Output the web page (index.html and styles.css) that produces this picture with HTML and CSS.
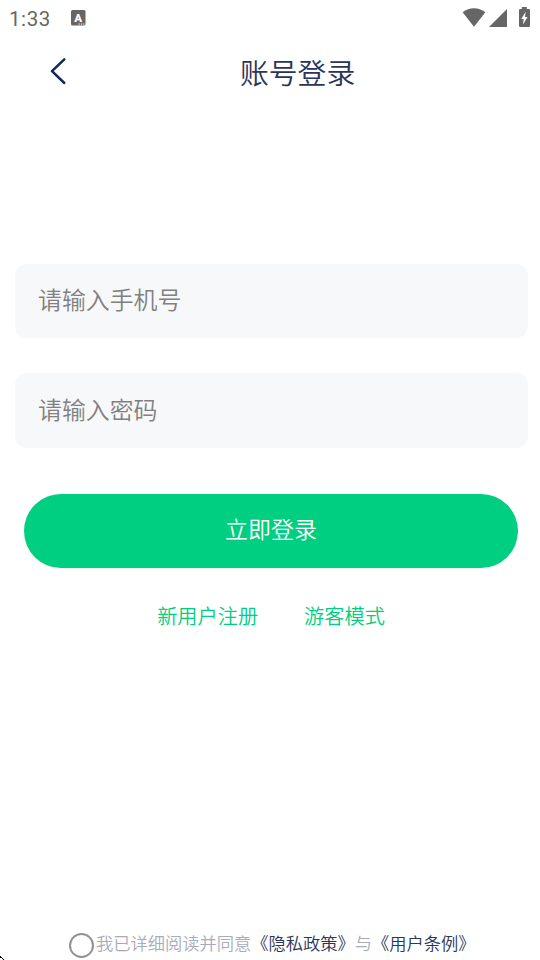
FILE: index.html
```html
<!DOCTYPE html>
<html lang="zh-CN">
<head>
<meta charset="utf-8">
<title>账号登录</title>
<link rel="stylesheet" href="styles.css">
</head>
<body>
<div class="screen">
  <div class="status">
    <span class="time">1:33</span>
    <svg class="app-icon" width="15" height="16" viewBox="0 0 15 16"><rect width="14.5" height="15.5" rx="1.5" fill="#666"/><text class="app-letter" x="7.200" y="11.500" text-anchor="middle">A</text><path d="M7.500 14h1.400m1 0h1.400m1 0h1.200" stroke="#fff" stroke-width="1"/></svg>
    <svg class="signals" width="70" height="22" viewBox="0 0 70 22"><g fill="#666"><path d="M.6 5.300C7.500-.1 16.500-.1 23.400 5.300L12 19.700z"/><path d="M45 2v18H27z"/><path d="M59.800 0h5v2h2.200q1 0 1 1v15.800q0 1.200-1.200 1.200h-8.600q-1.200 0-1.200-1.200V3q0-1 1-1h1.800z"/></g><path d="M63.700 4.700 59.200 12h2.500l-.8 5.500L65.600 10h-2.700z" fill="#fff"/></svg>
  </div>
  <header class="header">
    <svg class="back" width="18" height="28" viewBox="0 0 18 28"><path d="M15.300 2.300 3 14.200 15.300 26" fill="none" stroke="#12285a" stroke-width="2.500" stroke-linecap="round" stroke-linejoin="round"/></svg>
    <h1 class="title">账号登录</h1>
  </header>
  <main class="form">
    <input class="field" type="text" placeholder="请输入手机号">
    <input class="field field-password" type="password" placeholder="请输入密码">
    <button class="submit">立即登录</button>
    <nav class="links"><a>新用户注册</a><a>游客模式</a></nav>
  </main>
  <footer class="terms">
    <span class="radio"></span>
    <p class="terms-text">我已详细阅读并同意<a>《隐私政策》</a>与<a>《用户条例》</a></p>
  </footer>
  <svg class="corner" width="5" height="5" viewBox="0 0 5 5" shape-rendering="crispEdges"><path d="M0 1h1v1h1v1H0zM2 3h1v1H2zM3 4h1v1H3z"/></svg>
</div>
</body>
</html>
```

FILE: styles.css
```css
* { box-sizing: border-box; }
body {
  margin: 0;
  background: #fff;
  font-family: "Noto Sans CJK SC", sans-serif;
}
.screen {
  position: relative;
  display: flex;
  flex-direction: column;
  height: 960px;
  overflow: hidden;
}
.status {
  display: flex;
  align-items: center;
  height: 36px;
  padding: 0 8px 0 9px;
}
.time {
  width: 62px;
  color: #666;
  font: 450 20.500px/36px Roboto, sans-serif;
  letter-spacing: .6px;
  padding-top: 1px;
}
.app-letter {
  fill: #fff;
  font: 900 11.500px Roboto, sans-serif;
}
.signals { margin-left: auto; }
.header {
  display: flex;
  height: 74px;
  padding-left: 49px;
}
.back { margin-top: 21px; }
.title {
  margin: 15px 0 0 173px;
  color: #2a3558;
  font-size: 28.800px;
  font-weight: 350;
  line-height: 42px;
}
.form {
  display: flex;
  flex-direction: column;
  padding: 154px 12.500px 0 14.500px;
}
.field {
  width: 100%;
  height: 74px;
  margin-bottom: 35px;
  padding: 0 23.500px 5px;
  border: 0;
  border-radius: 12px;
  background: #f7f8fa;
  font: 350 23.900px "Noto Sans CJK SC", sans-serif;
}
.field-password {
  height: 75px;
  margin-bottom: 34px;
  padding-bottom: 4px;
}
.field::placeholder { color: #808080; }
.submit {
  height: 74px;
  margin: 12px 10px 0 9px;
  padding: 0 0 6px 1px;
  border: 0;
  border-radius: 37px;
  background: #00ce80;
  color: #fff;
  font: 350 23px "Noto Sans CJK SC", sans-serif;
}
.links {
  display: flex;
  justify-content: center;
  gap: 46px;
  margin-top: 33px;
  color: #00ce80;
  font-size: 20.200px;
  font-weight: 350;
  line-height: 30px;
}
.terms {
  display: flex;
  align-items: center;
  height: 30px;
  margin-top: auto;
  padding-left: 69px;
}
.radio {
  width: 25px;
  height: 25px;
  margin-right: 2px;
  border: 2px solid #929292;
  border-radius: 50%;
}
.terms-text {
  margin: 0 0 4px;
  color: #a9abba;
  font-size: 17.250px;
  font-weight: 350;
  line-height: 26px;
  white-space: nowrap;
}
.terms-text a { color: #2a3558; }
.corner {
  position: absolute;
  bottom: 0;
  left: 0;
}
```
